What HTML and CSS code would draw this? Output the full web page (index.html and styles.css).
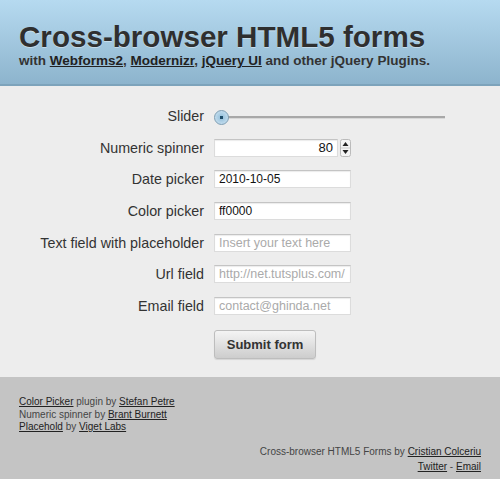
FILE: index.html
```html
<!DOCTYPE html>
<html>
<head>
<meta charset="utf-8">
<link rel="stylesheet" href="styles.css">
</head>
<body>
<header class="header">
  <h1 class="title">Cross-browser HTML5 forms</h1>
  <p class="subtitle">with <a href="#">Webforms2</a>, <a href="#">Modernizr</a>, <a href="#">jQuery UI</a> and other jQuery Plugins.</p>
</header>
<main class="main">
  <form class="form">
    <label class="label">Slider</label>
    <div class="slider"><span class="track"></span><span class="knob"></span></div>

    <label class="label">Numeric spinner</label>
    <div class="spin-wrap">
      <span class="field field-num">80</span>
      <span class="spin"><svg width="11" height="18" viewBox="0 0 11 18"><rect x="0.5" y="0.5" width="10" height="17" rx="2" fill="#f4f4f4" stroke="#bbb"/><line x1="1" y1="9" x2="10" y2="9" stroke="#ccc"/><path d="M2.5 7 L5.5 3 L8.5 7 Z" fill="#222"/><path d="M2.5 11 L5.5 15 L8.5 11 Z" fill="#222"/></svg></span>
    </div>

    <label class="label">Date picker</label>
    <span class="field">2010-10-05</span>

    <label class="label">Color picker</label>
    <span class="field">ff0000</span>

    <label class="label">Text field with placeholder</label>
    <span class="field ph">Insert your text here</span>

    <label class="label">Url field</label>
    <span class="field ph">http://net.tutsplus.com/</span>

    <label class="label">Email field</label>
    <span class="field ph">contact@ghinda.net</span>

    <span></span>
    <div><button type="button" class="submit">Submit form</button></div>
  </form>
</main>
<footer class="footer">
  <div class="credits">
    <a href="#">Color Picker</a> plugin by <a href="#">Stefan Petre</a><br>
    Numeric spinner by <a href="#">Brant Burnett</a><br>
    <a href="#">Placehold</a> by <a href="#">Viget Labs</a>
  </div>
  <div class="author">
    Cross-browser HTML5 Forms by <a href="#">Cristian Colceriu</a><br>
    <a href="#">Twitter</a> - <a href="#">Email</a>
  </div>
</footer>
</body>
</html>
```
FILE: styles.css
```css
html, body {
  margin: 0;
  padding: 0;
}
body {
  background: #ededed;
  font-family: "Liberation Sans", Arial, sans-serif;
  color: #333;
  width: 500px;
  height: 479px;
  overflow: hidden;
}
.header {
  height: 86px;
  background: linear-gradient(#b6daf0, #8db4cd);
  border-bottom: 2px solid #7da3bb;
  box-sizing: border-box;
  padding: 21px 0 0 19px;
}
.title {
  margin: 0;
  font-size: 29.6px;
  line-height: 31px;
  font-weight: bold;
  color: #2f2f2f;
  text-shadow: 0 1px 0 rgba(255,255,255,0.4);
}
.subtitle {
  margin: 1px 0 0;
  font-size: 13.5px;
  line-height: 15px;
  font-weight: bold;
  color: #333;
}
.subtitle a {
  color: #222;
  text-decoration: underline;
}
.main {
  height: 291px;
  box-sizing: border-box;
  padding-top: 21px;
}
.form {
  display: grid;
  grid-template-columns: 204px 137px;
  column-gap: 10px;
  row-gap: 13.7px;
  align-items: center;
}
.label {
  text-align: right;
  font-size: 14.3px;
  line-height: 18px;
  color: #333;
}
.slider {
  position: relative;
  height: 18px;
  width: 231px;
  top: 1px;
}
.track {
  display: block;
  position: absolute;
  left: 6px;
  right: 0;
  top: 8px;
  height: 2px;
  background: #a8a8a8;
  border-bottom: 1px solid #d8d8d8;
}
.knob {
  position: absolute;
  left: 0;
  top: 2px;
  width: 13px;
  height: 13px;
  border-radius: 50%;
  background: radial-gradient(circle, #1f4d6a 0 1.5px, #9fc6df 2px, #d4e8f5 100%);
  border: 1px solid #7c9db3;
}
.field {
  display: block;
  box-sizing: border-box;
  height: 18px;
  width: 137px;
  background: #fff;
  border: 1px solid #dcdcdc;
  border-top-color: #c4c4c4;
  box-shadow: inset 0 1px 1px rgba(0,0,0,0.08);
  font-size: 12px;
  line-height: 16px;
  padding: 0 4px;
  color: #111;
}
.ph {
  color: #aaa;
  font-size: 12.5px;
}
.spin-wrap {
  display: flex;
  align-items: center;
  gap: 2px;
}
.field-num {
  text-align: right;
  font-size: 13px;
}
.spin {
  display: block;
  height: 18px;
}
.submit {
  margin-top: 1px;
  width: 102px;
  height: 29px;
  border: 1px solid #bdbdbd;
  border-radius: 3px;
  background: linear-gradient(#f4f4f4, #cdcdcd);
  font-family: "Liberation Sans", Arial, sans-serif;
  font-size: 13px;
  font-weight: bold;
  color: #333;
  padding: 0;
  box-shadow: 0 1px 1px rgba(0,0,0,0.1);
}
.footer {
  background: #c4c4c4;
  height: 102px;
  box-sizing: border-box;
  padding: 19px 19px 0 19px;
  font-size: 10px;
  line-height: 12.5px;
  color: #444;
}
.footer a {
  color: #222;
  text-decoration: underline;
}
.author {
  margin-top: 10px;
  text-align: right;
  line-height: 15px;
}
```
